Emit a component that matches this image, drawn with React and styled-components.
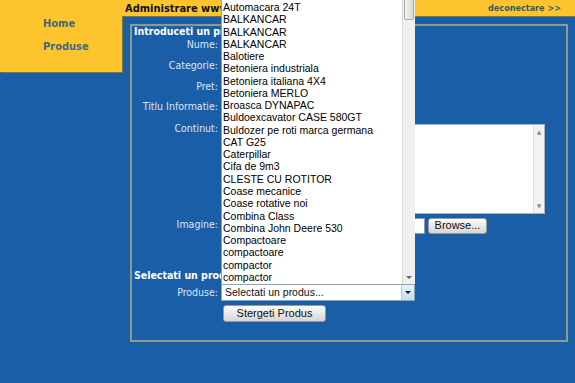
import React from 'react';
import styled, { createGlobalStyle } from 'styled-components';

const GlobalStyle = createGlobalStyle`
  html, body {
    margin: 0;
    padding: 0;
    background: #1a5ea8;
    height: 100%;
    overflow: hidden;
  }
  body {
    font-family: "DejaVu Sans Condensed", "DejaVu Sans", sans-serif;
  }
`;

const Page = styled.div`
  display: grid;
  grid-template-columns: 122px 1fr;
  align-items: start;
  min-height: 383px;
  background: #1a5ea8;
`;

const Sidebar = styled.nav`
  background: #fec42e;
  height: 72px;
  box-shadow: 1px 1px 0 #7c7446;
  padding: 18px 0 0 43px;
  box-sizing: border-box;
  display: flex;
  flex-direction: column;
  gap: 11px;
`;

const NavLink = styled.a`
  font-weight: bold;
  font-size: 11px;
  line-height: 12px;
  color: #3d6b7c;
  text-decoration: none;
`;

const Main = styled.div`
  display: flex;
  flex-direction: column;
`;

const Header = styled.div`
  height: 16px;
  background: #fec42e;
  box-shadow: 0 1px 0 #7c7446;
  display: flex;
  align-items: center;
  justify-content: space-between;
  padding: 0 14px 0 3px;
  white-space: nowrap;
`;

const SiteTitle = styled.span`
  font-weight: bold;
  font-size: 11px;
  color: #111;
`;

const Logout = styled.a`
  font-weight: bold;
  font-size: 9px;
  color: #2e5c70;
  text-decoration: none;
`;

const Frame = styled.div`
  margin: 8px 7px 0 8px;
  border: 2px solid #8d9c88;
  padding: 0 2px 18px 2px;
  display: flex;
  flex-direction: column;
`;

const SectionTitle = styled.div`
  font-weight: bold;
  font-size: 10.5px;
  color: #fff;
  white-space: nowrap;
  height: ${p => p.$h}px;
  line-height: 10px;
  margin-top: ${p => p.$mt || 0}px;
`;

const Row = styled.div`
  display: grid;
  grid-template-columns: 84px 1fr;
  column-gap: 3px;
  align-items: ${p => p.$top ? 'start' : 'center'};
  height: ${p => p.$h}px;
  margin-top: ${p => p.$mt || 0}px;
`;

const Label = styled.label`
  text-align: right;
  font-size: 10.5px;
  line-height: 12px;
  color: #dde6fb;
  white-space: nowrap;
  padding-top: ${p => p.$pt || 0}px;
`;

const TextInput = styled.div`
  width: 180px;
  height: 17px;
  background: #fff;
  border: 1px solid #7f9db9;
  box-sizing: border-box;
`;

const TextArea = styled.div`
  margin-top: 7px;
  width: 324px;
  height: 90px;
  background: #fff;
  border: 1px solid #aab4c0;
  box-sizing: border-box;
  display: flex;
  justify-content: flex-end;
`;

const AreaScroll = styled.div`
  width: 10px;
  background: #f2f2f2;
  border-left: 1px solid #e2e2e2;
  display: flex;
  flex-direction: column;
  justify-content: space-between;
  align-items: center;
  padding: 4px 0;
  font-size: 6px;
  color: #888;
  line-height: 6px;
`;

const FileRow = styled.div`
  display: flex;
  gap: 3px;
  margin-top: 2px;
`;

const FileField = styled.div`
  width: 204px;
  height: 16px;
  background: #fff;
  border: 1px solid #8a9bb0;
  box-sizing: border-box;
`;

const Button = styled.button`
  font-family: "Liberation Sans", Arial, sans-serif;
  font-size: 11px;
  color: #111;
  height: ${p => p.$h || 16}px;
  width: ${p => p.$w}px;
  margin-left: ${p => p.$ml || 0}px;
  padding: 0;
  border: 1px solid #9a9a9a;
  border-radius: 3px;
  background: linear-gradient(#fdfdfd, #e6e6e6 55%, #d6d6d6);
  line-height: 1;
`;

const SelectWrap = styled.div`
  position: relative;
  width: 194px;
  height: 17px;
`;

const SelectBox = styled.div`
  height: 17px;
  background: #fff;
  border: 1px solid #8fa2b8;
  box-sizing: border-box;
  display: flex;
  align-items: center;
  font-family: "Liberation Sans", Arial, sans-serif;
  font-size: 10.5px;
  color: #111;
  padding-left: 3px;
`;

const SelectText = styled.span`
  flex: 1;
`;

const DropButton = styled.div`
  width: 12px;
  height: 15px;
  background: linear-gradient(#e8f3fb, #c2dcf0);
  border-left: 1px solid #b6cbe0;
  display: flex;
  align-items: center;
  justify-content: center;
`;

const Arrow = styled.span`
  width: 0;
  height: 0;
  border-left: 3px solid transparent;
  border-right: 3px solid transparent;
  border-top: 3px solid ${p => p.$c || '#111'};
`;

const ListBox = styled.div`
  position: absolute;
  left: 0;
  bottom: 100%;
  width: 194px;
  height: 295px;
  background: #fff;
  border-left: 1px solid #9a9a9a;
  box-sizing: border-box;
  display: flex;
  z-index: 10;
  overflow: hidden;
`;

const Options = styled.div`
  flex: 1;
  display: flex;
  flex-direction: column;
  font-family: "Liberation Sans", Arial, sans-serif;
  font-size: 10.5px;
  color: #000;
`;

const Option = styled.div`
  height: 12.27px;
  line-height: 12.27px;
  padding-left: 1px;
  white-space: nowrap;
`;

const ListScroll = styled.div`
  width: 12px;
  background: #f0f0f0;
  border-left: 1px solid #dcdcdc;
  display: flex;
  flex-direction: column;
  justify-content: space-between;
  align-items: center;
  padding-bottom: 5px;
`;

const Thumb = styled.div`
  margin-top: 2px;
  width: 10px;
  height: 29px;
  border: 1px solid #a8a8a8;
  border-radius: 2px;
  box-sizing: border-box;
  background: linear-gradient(90deg, #f4f4f4, #d8d8d8);
`;

const options = [
  'Automacara ATN 2000',
  'Automacara 24T',
  'BALKANCAR',
  'BALKANCAR',
  'BALKANCAR',
  'Balotiere',
  'Betoniera industriala',
  'Betoniera italiana 4X4',
  'Betoniera MERLO',
  'Broasca DYNAPAC',
  'Buldoexcavator CASE 580GT',
  'Buldozer pe roti marca germana',
  'CAT G25',
  'Caterpillar',
  'Cifa de 9m3',
  'CLESTE CU ROTITOR',
  'Coase mecanice',
  'Coase rotative noi',
  'Combina Class',
  'Combina John Deere 530',
  'Compactoare',
  'compactoare',
  'compactor',
  'compactor',
];

export default function App() {
  return (
    <>
      <GlobalStyle />
      <Page>
        <Sidebar>
          <NavLink href="#">Home</NavLink>
          <NavLink href="#">Produse</NavLink>
        </Sidebar>
        <Main>
          <Header>
            <SiteTitle>Administrare www.utilaje.ro</SiteTitle>
            <Logout href="#">deconectare &gt;&gt;</Logout>
          </Header>
          <Frame>
            <SectionTitle $h={8}>Introduceti un produs nou</SectionTitle>
            <Row $h={20.7}><Label>Nume:</Label><TextInput /></Row>
            <Row $h={20.7}><Label>Categorie:</Label><TextInput /></Row>
            <Row $h={20.7}><Label>Pret:</Label><TextInput /></Row>
            <Row $h={20.7}><Label>Titlu Informatie:</Label><TextInput /></Row>
            <Row $h={99} $top>
              <Label $pt={5}>Continut:</Label>
              <TextArea>
                <AreaScroll><span>▲</span><span>▼</span></AreaScroll>
              </TextArea>
            </Row>
            <Row $h={21} $top>
              <Label $pt={2}>Imagine:</Label>
              <FileRow>
                <FileField />
                <Button $w={59}>Browse...</Button>
              </FileRow>
            </Row>
            <SectionTitle $h={10} $mt={33}>Selectati un produs pentru stergere</SectionTitle>
            <Row $h={17} $mt={4}>
              <Label>Produse:</Label>
              <SelectWrap>
                <ListBox>
                  <Options>
                    {options.map((o, i) => <Option key={i}>{o}</Option>)}
                  </Options>
                  <ListScroll>
                    <Thumb />
                    <Arrow $c="#666" />
                  </ListScroll>
                </ListBox>
                <SelectBox>
                  <SelectText>Selectati un produs...</SelectText>
                  <DropButton><Arrow /></DropButton>
                </SelectBox>
              </SelectWrap>
            </Row>
            <Row $h={17} $mt={4}>
              <span />
              <Button $w={103} $h={17} $ml={2}>Stergeti Produs</Button>
            </Row>
          </Frame>
        </Main>
      </Page>
    </>
  );
}
